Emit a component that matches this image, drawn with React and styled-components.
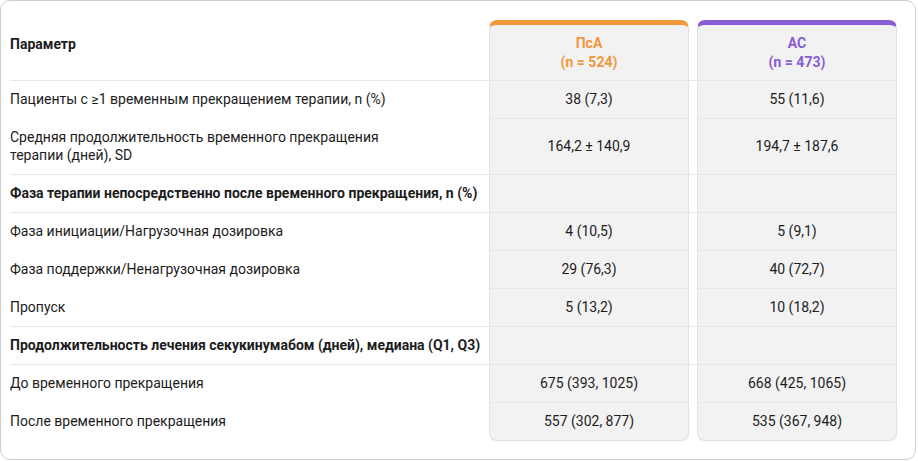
import styled, { createGlobalStyle } from "styled-components";

const GlobalStyle = createGlobalStyle`
  body {
    margin: 0;
    background: #fff;
    font-family: Roboto, "Noto Sans", sans-serif;
    color: #1c1c1c;
  }
`;

const groups = [
  { label: "ПсА", n: 524, color: "#f0983a" },
  { label: "АС", n: 473, color: "#8a5bd6" },
];

// group rows hold only a bold label, no values
const rows = [
  { label: "Пациенты с ≥1 временным прекращением терапии, n (%)", values: ["38 (7,3)", "55 (11,6)"] },
  {
    label: "Средняя продолжительность временного прекращения\nтерапии (дней), SD",
    values: ["164,2 ± 140,9", "194,7 ± 187,6"],
  },
  { label: "Фаза терапии непосредственно после временного прекращения, n (%)", group: true },
  { label: "Фаза инициации/Нагрузочная дозировка", values: ["4 (10,5)", "5 (9,1)"] },
  { label: "Фаза поддержки/Ненагрузочная дозировка", values: ["29 (76,3)", "40 (72,7)"] },
  { label: "Пропуск", values: ["5 (13,2)", "10 (18,2)"] },
  { label: "Продолжительность лечения секукинумабом (дней), медиана (Q1, Q3)", group: true },
  { label: "До временного прекращения", values: ["675 (393, 1025)", "668 (425, 1065)"] },
  { label: "После временного прекращения", values: ["557 (302, 877)", "535 (367, 948)"] },
];

const App = () => {
  return (
    <>
      <GlobalStyle />
      <Card>
        <HeadRow>
          <HeadLabel>Параметр</HeadLabel>
          {groups.map((g) => (
            <HeadCell key={g.label} $color={g.color}>
              {g.label}
              <br />
              (n = {g.n})
            </HeadCell>
          ))}
        </HeadRow>
        {rows.map((row, i) => {
          const next = rows[i + 1];
          // full-width rule under group rows and right above them
          const ruled = row.group || (next && next.group);
          const last = i === rows.length - 1;
          return (
            <Row key={row.label} $ruled={ruled}>
              <Label $bold={row.group} $ruled={ruled}>
                {row.label}
              </Label>
              {[0, 1].map((c) => (
                <Value key={c} $ruled={ruled} $last={last}>
                  {row.values ? row.values[c] : ""}
                </Value>
              ))}
            </Row>
          );
        })}
      </Card>
    </>
  );
};

const Card = styled.div`
  box-sizing: border-box;
  width: 916px;
  height: 460px;
  border: 1px solid #cfcfcf;
  border-radius: 10px;
  padding: 19px 18px 19px 9px;
  background: #fff;
`;

const HeadRow = styled.div`
  display: grid;
  grid-template-columns: 1fr 200px 200px;
  column-gap: 8px;
  border-bottom: 1px solid #e8e8e8;
`;

const HeadLabel = styled.div`
  font-size: 14px;
  font-weight: 700;
  line-height: 18px;
  padding-top: 15px;
`;

const HeadCell = styled.div`
  box-sizing: border-box;
  height: 60px;
  background: #f2f2f3;
  border: 1px solid #e2e2e4;
  border-bottom: none;
  border-top: 5px solid ${(p) => p.$color};
  border-radius: 8px 8px 0 0;
  color: ${(p) => p.$color};
  font-size: 14px;
  font-weight: 700;
  line-height: 19px;
  text-align: center;
  padding-top: 9px;
`;

const Row = styled.div`
  display: grid;
  grid-template-columns: 1fr 200px 200px;
  column-gap: 8px;
  border-bottom: ${(p) => (p.$ruled ? "1px solid #e8e8e8" : "none")};
`;

const Cell = styled.div`
  box-sizing: border-box;
  min-height: ${(p) => (p.$ruled ? "37px" : "38px")};
  padding: 9px 0 10px;
  font-size: 14px;
  line-height: 18px;
  display: flex;
  align-items: center;
`;

const Label = styled(Cell)`
  font-weight: ${(p) => (p.$bold ? 700 : 400)};
  white-space: pre-line;
  border-bottom: ${(p) => (p.$ruled ? "none" : "1px solid transparent")};
`;

const Value = styled(Cell)`
  justify-content: center;
  background: #f2f2f3;
  border-left: 1px solid #e2e2e4;
  border-right: 1px solid #e2e2e4;
  border-bottom: ${(p) =>
    p.$last ? "1px solid #e2e2e4" : p.$ruled ? "none" : "1px solid #e6e6e8"};
  border-radius: ${(p) => (p.$last ? "0 0 8px 8px" : "0")};
  box-shadow: ${(p) => (p.$last ? "0 1px 2px rgba(0, 0, 0, 0.04)" : "none")};
`;

export default App;
